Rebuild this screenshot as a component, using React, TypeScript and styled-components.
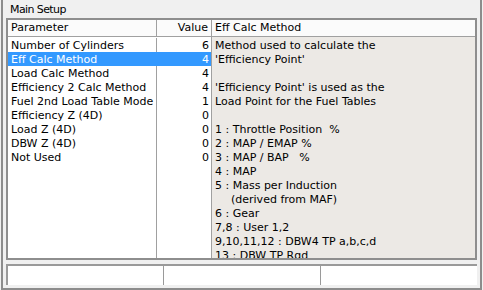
import React from "react";
import styled, { createGlobalStyle } from "styled-components";

const Global = createGlobalStyle`
  html, body { margin: 0; padding: 0; background: #f0f0f0; }
  body { font-family: "DejaVu Sans", Verdana, sans-serif; font-size: 11px; color: #000; }
`;

const Window = styled.div`
  box-sizing: border-box;
  margin-left: 1px;
  width: 481px;
  height: 290px;
  border-left: 2px solid #8c8c8c;
  border-right: 2px solid #8c8c8c;
  border-bottom: 2px solid #8c8c8c;
  background: #f0f0f0;
  display: flex;
  flex-direction: column;
  padding: 0 3px;
`;

const Title = styled.div`
  height: 18px;
  line-height: 20px;
  padding-left: 4px;
  font-family: "DejaVu Sans", Verdana, sans-serif;
  font-size: 11px;
  letter-spacing: -0.6px;
  white-space: nowrap;
`;

const TableBox = styled.div`
  box-sizing: border-box;
  height: 242px;
  border: 2px solid #8e8e8e;
  display: flex;
  overflow: hidden;
`;

const ListPane = styled.div`
  width: 203px;
  display: flex;
  flex-direction: column;
  background: #fff;
  border-right: 1px solid #a0a0a0;
`;

const DescPane = styled.div`
  flex: 1;
  display: flex;
  flex-direction: column;
  min-width: 0;
`;

const HeaderRow = styled.div`
  box-sizing: border-box;
  height: 17px;
  display: flex;
  background: #fbfbfb;
  border-bottom: 1px solid #a0a0a0;
`;

const HeaderCell = styled.div<{ $w?: number; $right?: boolean; $sep?: boolean }>`
  box-sizing: border-box;
  ${(p) => (p.$w ? `width: ${p.$w}px;` : "flex: 1;")}
  line-height: 16px;
  padding: 0 ${(p) => (p.$right ? "3px" : "0")} 0 ${(p) => (p.$right ? "0" : "3px")};
  text-align: ${(p) => (p.$right ? "right" : "left")};
  border-right: ${(p) => (p.$sep ? "1px solid #a0a0a0" : "none")};
  white-space: nowrap;
  overflow: hidden;
`;

const ListBody = styled.div`
  flex: 1;
  display: flex;
  flex-direction: column;
  padding-top: 1px;
`;

const Row = styled.div<{ $selected?: boolean; $fill?: boolean }>`
  display: flex;
  height: ${(p) => (p.$fill ? "auto" : "14px")};
  ${(p) => (p.$fill ? "flex: 1;" : "")}
  line-height: 16px;
  background: ${(p) => (p.$selected ? "#3399ff" : "transparent")};
  color: ${(p) => (p.$selected ? "#fff" : "#000")};
`;

const ParamCell = styled.div<{ $selected?: boolean }>`
  box-sizing: border-box;
  width: 149px;
  padding-left: 3px;
  border-right: 1px solid ${(p) => (p.$selected ? "#3399ff" : "#a0a0a0")};
  white-space: nowrap;
`;

const ValueCell = styled.div`
  flex: 1;
  text-align: right;
  padding-right: 2px;
`;

const DescBody = styled.div`
  flex: 1;
  background: #ece9e5;
  padding: 1px 0 0 3px;
  overflow: hidden;
`;

const Line = styled.div<{ $indent?: number }>`
  height: 14px;
  line-height: 16px;
  white-space: pre;
  padding-left: ${(p) => p.$indent ?? 0}px;
`;

const StatusBar = styled.div`
  box-sizing: border-box;
  margin-top: 4px;
  height: 21px;
  display: flex;
  background: #fff;
  border-top: 2px solid #9a9a9a;
  border-left: 2px solid #9a9a9a;
`;

const StatusPane = styled.div<{ $w?: number; $sep?: boolean }>`
  ${(p) => (p.$w ? `width: ${p.$w}px;` : "flex: 1;")}
  border-right: ${(p) => (p.$sep ? "1px solid #9a9a9a" : "none")};
`;

const rows: [string, string][] = [
  ["Number of Cylinders", "6"],
  ["Eff Calc Method", "4"],
  ["Load Calc Method", "4"],
  ["Efficiency 2 Calc Method", "4"],
  ["Fuel 2nd Load Table Mode", "1"],
  ["Efficiency Z (4D)", "0"],
  ["Load Z (4D)", "0"],
  ["DBW Z (4D)", "0"],
  ["Not Used", "0"],
];

const desc: { t: string; indent?: number }[] = [
  { t: "Method used to calculate the" },
  { t: "'Efficiency Point'" },
  { t: "" },
  { t: "'Efficiency Point' is used as the" },
  { t: "Load Point for the Fuel Tables" },
  { t: "" },
  { t: "1 : Throttle Position  %" },
  { t: "2 : MAP / EMAP %" },
  { t: "3 : MAP / BAP   %" },
  { t: "4 : MAP" },
  { t: "5 : Mass per Induction" },
  { t: "(derived from MAF)", indent: 16 },
  { t: "6 : Gear" },
  { t: "7,8 : User 1,2" },
  { t: "9,10,11,12 : DBW4 TP a,b,c,d" },
  { t: "13 : DBW TP Rqd" },
];

export default function App() {
  const selected = 1;
  return (
    <>
      <Global />
      <Window>
        <Title>Main Setup</Title>
        <TableBox>
          <ListPane>
            <HeaderRow>
              <HeaderCell $w={149} $sep>
                Parameter
              </HeaderCell>
              <HeaderCell $right>Value</HeaderCell>
            </HeaderRow>
            <ListBody>
              {rows.map(([name, value], i) => (
                <Row key={name} $selected={i === selected}>
                  <ParamCell $selected={i === selected}>{name}</ParamCell>
                  <ValueCell>{value}</ValueCell>
                </Row>
              ))}
              <Row $fill>
                <ParamCell />
                <ValueCell />
              </Row>
            </ListBody>
          </ListPane>
          <DescPane>
            <HeaderRow>
              <HeaderCell>Eff Calc Method</HeaderCell>
            </HeaderRow>
            <DescBody>
              {desc.map((d, i) => (
                <Line key={i} $indent={d.indent}>
                  {d.t}
                </Line>
              ))}
            </DescBody>
          </DescPane>
        </TableBox>
        <StatusBar>
          <StatusPane $w={155} $sep />
          <StatusPane $w={156} $sep />
          <StatusPane />
        </StatusBar>
      </Window>
    </>
  );
}
